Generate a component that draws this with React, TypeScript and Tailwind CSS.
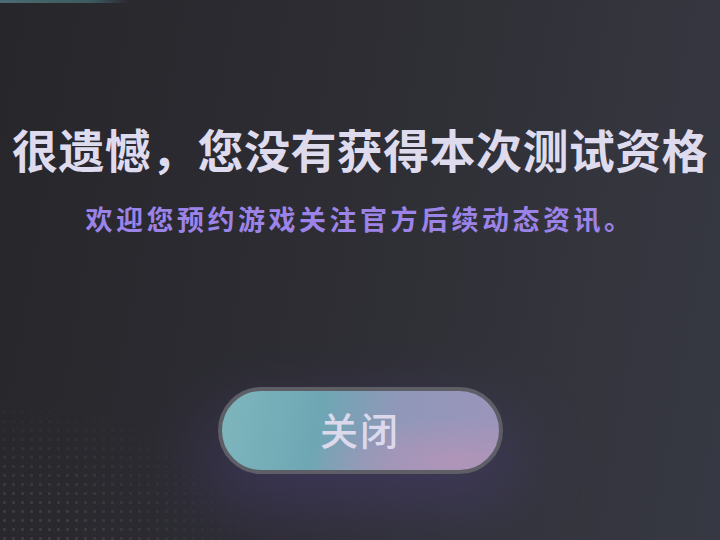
export default function App() {
  return (
    <div
      className="relative w-full h-[540px] overflow-hidden flex flex-col items-center bg-[linear-gradient(100deg,#27262b_0%,#2d2d33_45%,#34353d_80%,#363843_100%)]"
      style={{ fontFamily: '"Noto Sans CJK SC", "Noto Sans", sans-serif' }}
    >
      {/* 左上角的青色细线 */}
      <div className="self-start w-[130px] h-[3px] bg-[linear-gradient(90deg,#4a6c72,#3d5a60_70%,transparent)]" />

      {/* 左下角点阵 */}
      <div className="absolute left-0 bottom-0 w-[260px] h-[150px] bg-[radial-gradient(circle,rgba(255,255,255,0.09)_1.3px,transparent_1.8px)] bg-[length:9px_9px] [mask-image:radial-gradient(ellipse_at_0%_100%,#000_20%,transparent_70%)]" />

      <h1 className="mt-[122px] text-[46px] leading-none font-bold tracking-[0.4px] text-[#dedbef] whitespace-nowrap">
        很遗憾，您没有获得本次测试资格
      </h1>
      <p className="mt-[34px] text-[27px] leading-none font-bold tracking-[3.5px] text-[#9c83e8] whitespace-nowrap">
        欢迎您预约游戏关注官方后续动态资讯。
      </p>

      <div className="relative mt-[155px]">
        {/* 按钮下方的紫色光晕 */}
        <div className="absolute -inset-x-4 -bottom-6 top-8 rounded-full bg-[#5a48a0] opacity-40 blur-2xl" />
        <button className="relative w-[285px] h-[87px] rounded-full border-[4px] border-[#5d5e66] bg-[radial-gradient(ellipse_at_85%_90%,#b095b8_0%,transparent_45%),linear-gradient(100deg,#7fb6bd_0%,#6ea7b4_35%,#8f98b8_60%,#9c94bc_100%)] text-[38px] font-medium tracking-[2px] text-[#dcd9ec] leading-none pb-[4px]">
          关闭
        </button>
      </div>
    </div>
  );
}
